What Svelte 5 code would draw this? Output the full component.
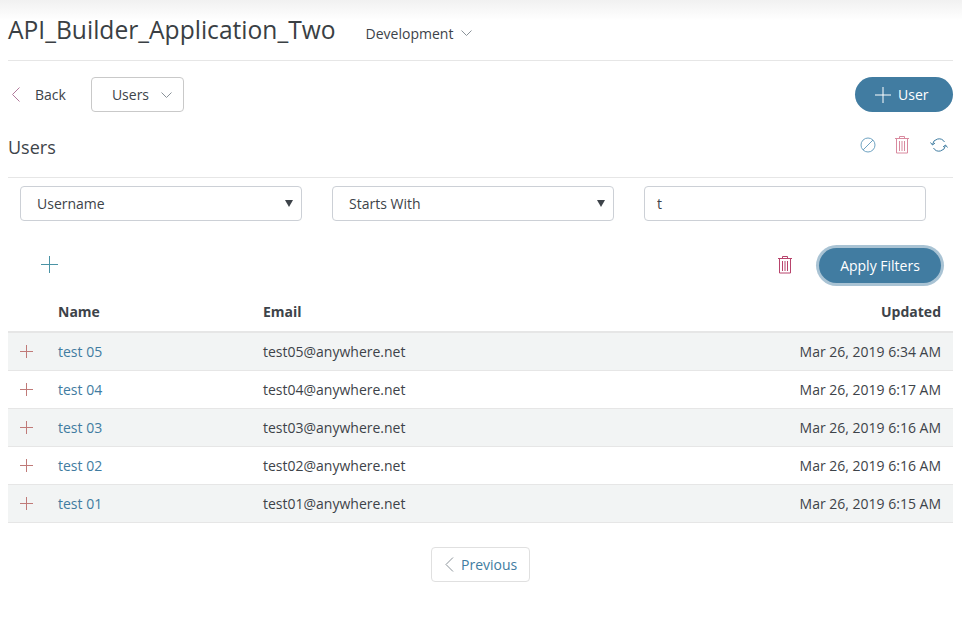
<script>
  const rows = [
    { name: 'test 05', email: 'test05@anywhere.net', updated: 'Mar 26, 2019 6:34 AM' },
    { name: 'test 04', email: 'test04@anywhere.net', updated: 'Mar 26, 2019 6:17 AM' },
    { name: 'test 03', email: 'test03@anywhere.net', updated: 'Mar 26, 2019 6:16 AM' },
    { name: 'test 02', email: 'test02@anywhere.net', updated: 'Mar 26, 2019 6:16 AM' },
    { name: 'test 01', email: 'test01@anywhere.net', updated: 'Mar 26, 2019 6:15 AM' }
  ];
</script>

{#snippet plus(size, color)}
  <svg width={size} height={size} viewBox="0 0 16 16" fill="none" stroke={color} stroke-width={16 / size}>
    <path d="M8 0V16M0 8H16" />
  </svg>
{/snippet}

{#snippet trash(color)}
  <svg width="16" height="19" viewBox="0 0 16 19" fill="none" stroke={color} stroke-width="1">
    <path d="M1 3.500H15M5.500 3.500V1.500H10.500V3.500M2.500 3.500V18H13.500V3.500M5.500 6V16M8 6V16M10.500 6V16" />
  </svg>
{/snippet}

{#snippet chevronDown()}
  <svg width="11" height="6" viewBox="0 0 11 6" fill="none" stroke="#8a9299" stroke-width="1">
    <path d="M0.500 0.500L5.500 5.500L10.500 0.500" />
  </svg>
{/snippet}

<div class="page">
  <header class="title-bar">
    <h1>API_Builder_Application_Two</h1>
    <span class="env">Development {@render chevronDown()}</span>
  </header>

  <div class="toolbar">
    <a class="back" href="#back">
      <svg width="10" height="15" viewBox="0 0 10 15" fill="none" stroke="#b0789a" stroke-width="1">
        <path d="M8.500 0.500L1.500 7.500L8.500 14.500" />
      </svg>
      Back
    </a>
    <button class="outline-btn users-btn">Users {@render chevronDown()}</button>
    <button class="add-btn">{@render plus(16, '#ffffff')} User</button>
  </div>

  <div class="section-head">
    <h2>Users</h2>
    <div class="section-icons">
      <svg width="16" height="16" viewBox="0 0 16 16" fill="none" stroke="#6fa3c2" stroke-width="1">
        <circle cx="8" cy="8" r="7" />
        <path d="M3 13L13 3" />
      </svg>
      {@render trash('#d98a9f')}
      <svg class="refresh" width="18" height="16" viewBox="0 0 18 16" fill="none" stroke="#3f7ca1" stroke-width="1">
        <path d="M2.500 7.500A6.500 6.500 0 0 1 14.500 5M15.500 8.500A6.500 6.500 0 0 1 3.500 11" />
        <path d="M0.500 5.500L2.500 8L5 6M13 10L15.500 8L17.500 10.500" />
      </svg>
    </div>
  </div>

  <div class="filters">
    <div class="select-wrap">
      <select class="field">
        <option>Username</option>
      </select>
    </div>
    <div class="select-wrap">
      <select class="field">
        <option>Starts With</option>
      </select>
    </div>
    <input class="field" value="t" />
  </div>

  <div class="filter-actions">
    <span class="add-filter">{@render plus(17, '#4a93a5')}</span>
    <span class="clear-filter">{@render trash('#b8446c')}</span>
    <button class="apply-btn">Apply Filters</button>
  </div>

  <table>
    <thead>
      <tr>
        <th class="expand"></th>
        <th class="name">Name</th>
        <th>Email</th>
        <th class="updated">Updated</th>
      </tr>
    </thead>
    <tbody>
      {#each rows as row, i}
        <tr class:odd={i % 2 === 0}>
          <td class="expand">{@render plus(13, '#c07a78')}</td>
          <td class="name"><a href="#user">{row.name}</a></td>
          <td>{row.email}</td>
          <td class="updated">{row.updated}</td>
        </tr>
      {/each}
    </tbody>
  </table>

  <div class="pager">
    <button class="outline-btn prev">
      <svg width="9" height="15" viewBox="0 0 9 15" fill="none" stroke="#8a9299" stroke-width="1">
        <path d="M8 0.500L1 7.500L8 14.500" />
      </svg>
      Previous
    </button>
  </div>
</div>

<style>
  :global(body) {
    background: #fff;
    color: #3d4349;
    font-family: 'Open Sans', sans-serif;
    font-size: 14px;
  }

  .page {
    height: 637px;
    box-sizing: border-box;
    padding: 0 9px 0 8px;
    background: linear-gradient(#f1f1f1, #fff 20px);
    overflow: hidden;
  }

  .title-bar {
    height: 60px;
    display: flex;
    align-items: center;
    gap: 30px;
    border-bottom: 1px solid #e6e6e6;
  }

  h1 {
    margin: 0 0 2px;
    font-size: 24.6px;
    font-weight: 400;
    color: #3a3f44;
  }

  .env {
    display: flex;
    align-items: center;
    gap: 8px;
    padding-top: 6px;
  }

  .toolbar {
    display: flex;
    align-items: center;
    margin-top: 16px;
    height: 35px;
  }

  .back {
    display: flex;
    align-items: center;
    gap: 14px;
    margin-left: 3px;
    color: inherit;
    text-decoration: none;
  }

  button {
    font: inherit;
    cursor: pointer;
  }

  .outline-btn {
    display: flex;
    align-items: center;
    background: #fff;
    border: 1px solid #c9c9c9;
    border-radius: 4px;
    color: inherit;
  }

  .users-btn {
    height: 35px;
    width: 93px;
    margin-left: 25px;
    padding: 0 0 0 20px;
    gap: 12px;
  }

  .add-btn {
    display: flex;
    align-items: center;
    justify-content: flex-start;
    gap: 7px;
    margin-left: auto;
    width: 98px;
    height: 35px;
    padding: 0 0 0 20px;
    background: #417ca1;
    color: #fff;
    border: none;
    border-radius: 18px;
  }

  .section-head {
    display: flex;
    align-items: center;
    justify-content: space-between;
    height: 65px;
    border-bottom: 1px solid #e6e6e6;
  }

  h2 {
    margin: 4px 0 0;
    font-size: 18px;
    font-weight: 400;
  }

  .section-icons {
    display: flex;
    align-items: center;
    gap: 18px;
    margin: 0 5px 0 0;
  }

  .refresh {
    margin-left: 2px;
  }

  .filters {
    display: grid;
    grid-template-columns: repeat(3, 282px);
    gap: 30px;
    margin: 8px 0 0 12px;
  }

  .select-wrap {
    position: relative;
  }

  .select-wrap::after {
    content: '';
    position: absolute;
    top: 14px;
    right: 9px;
    border-left: 4px solid transparent;
    border-right: 4px solid transparent;
    border-top: 7px solid #3d4349;
    pointer-events: none;
  }

  .field {
    box-sizing: border-box;
    width: 100%;
    height: 35px;
    padding: 0 12px;
    background: #fff;
    border: 1px solid #ccd0d6;
    border-radius: 4px;
    color: inherit;
    font: inherit;
  }

  select.field {
    appearance: none;
    padding-left: 16px;
  }

  .filter-actions {
    display: flex;
    align-items: center;
    height: 64px;
    margin-top: 11px;
    padding-bottom: 1px;
    box-sizing: content-box;
  }

  .add-filter {
    display: flex;
    margin-left: 33px;
  }

  .clear-filter {
    display: flex;
    margin-left: auto;
  }

  .apply-btn {
    margin: 2px 12px 0 26px;
    width: 122px;
    height: 35px;
    padding: 0;
    background: #417ca1;
    color: #fff;
    border: none;
    border-radius: 18px;
    box-shadow: 0 0 0 3px #a9c3d4;
  }

  table {
    width: 100%;
    border-collapse: collapse;
  }

  th {
    height: 35px;
    padding: 0 0 5px;
    box-sizing: border-box;
    text-align: left;
    font-weight: 700;
    border-bottom: 2px solid #e6e6e6;
  }

  th.updated {
    text-align: right;
  }

  td {
    height: 37px;
    padding: 0;
    border-bottom: 1px solid #e6e6e6;
  }

  .odd td {
    background: #f2f4f4;
  }

  .expand {
    width: 50px;
    padding-left: 12px;
    box-sizing: border-box;
    line-height: 0;
  }

  .name {
    width: 205px;
  }

  .name a {
    color: #417ca1;
    text-decoration: none;
  }

  .updated {
    text-align: right;
    padding-right: 12px;
  }

  .pager {
    display: flex;
    justify-content: center;
    margin-top: 24px;
  }

  .prev {
    height: 35px;
    width: 99px;
    padding: 0 0 0 13px;
    gap: 7px;
    border-color: #e0e0e0;
    color: #417ca1;
  }
</style>
